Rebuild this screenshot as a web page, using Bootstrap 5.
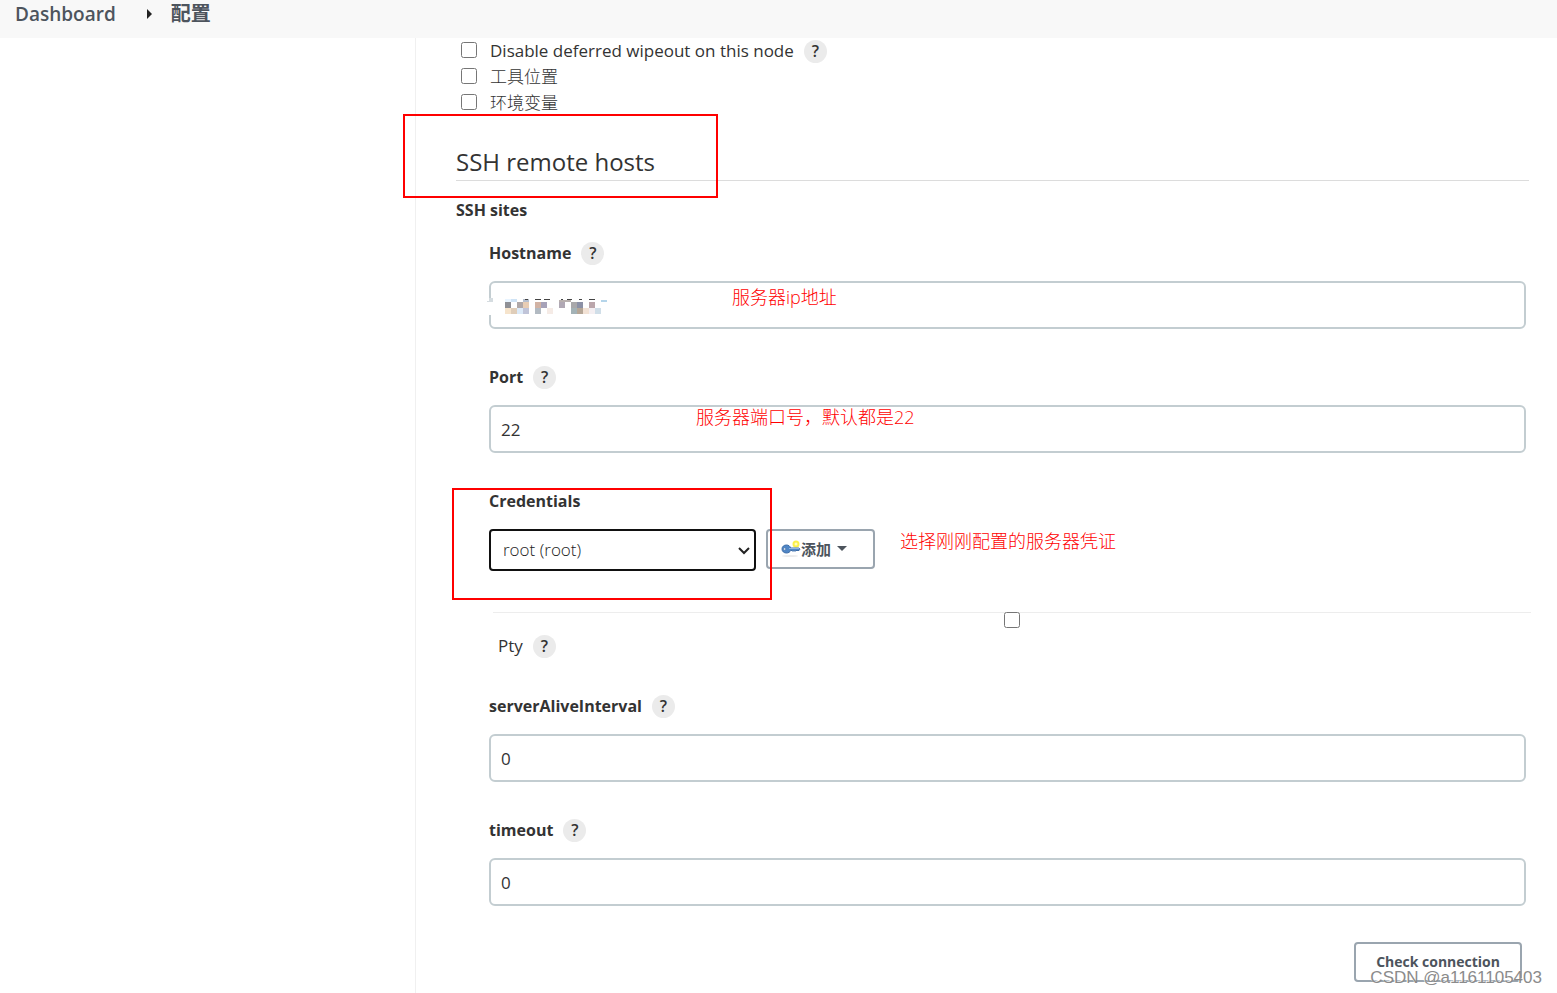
<!DOCTYPE html>
<html lang="zh-CN">
<head>
<meta charset="utf-8">
<meta name="viewport" content="width=device-width, initial-scale=1">
<title>配置 - Dashboard</title>
<link href="https://cdn.jsdelivr.net/npm/bootstrap@5.3.0/dist/css/bootstrap.min.css" rel="stylesheet">
<style>
  body {
    font-family: "Open Sans", "Noto Sans CJK SC", sans-serif;
    font-size: 17px;
    line-height: 26px;
    color: #333;
  }
  .crumb-bar { background: #f8f8f8; height: 38px; padding: 0 15px 10px; font-size: 19px; font-weight: 600; }
  .crumb-bar a { color: #4d545d; }
  .crumb-bar .crumb-current { font-size: 20px; }
  .crumb-bar svg { margin: 0 18px 0 30px; }
  .side-col { width: 415px; }
  .main-col { border-left: 1px solid #f0f0f0; padding: 0 28px 0 40px; min-width: 0; }
  .tick { width: 16px; height: 16px; margin: 0; flex: none; }
  .option-row { gap: 13px; padding-left: 5px; }
  .option-row .tick { margin-bottom: 2px; }
  .option-row label { line-height: 26px; }
  .option-text { gap: 10px; }
  .help-dot {
    width: 23px; height: 23px; border: 0; border-radius: 50%; padding: 0;
    background: #ebebeb; color: #333; font-size: 16px; font-weight: 600; line-height: 23px;
  }
  .section-title { font-size: 24px; font-weight: 500; line-height: 36px; margin: 0; padding-top: 28px; border-bottom: 1px solid #dcdcdc; }
  .sub-title { font-size: 16px; font-weight: 700; line-height: 26px; margin: 16px 0 18px; }
  .site-form { padding: 0 3px 0 33px; }
  .field { margin-bottom: 36px; }
  .field-head { height: 24px; gap: 10px; margin-bottom: 16px; }
  .field-head label { font-size: 16px; font-weight: 700; }
  .field-input { height: 48px; border: 2px solid #c3cdd1; border-radius: 6px; padding: 0 10px; font-size: 17px; color: #333; font-weight: 400; }
  .cred-select {
    width: 267px; height: 42px; border: 2px solid #111; border-radius: 4px; padding: 0 12px;
    font-size: 17px; font-weight: 300; color: #222; background-size: 14px 12px; background-position: right 3px center;
    background-image: url("data:image/svg+xml,%3csvg xmlns='http://www.w3.org/2000/svg' viewBox='0 0 14 12'%3e%3cpath fill='none' stroke='%23222' stroke-width='2' d='M2 4l5 5 5-5'/%3e%3c/svg%3e");
  }
  .jbtn { height: 40px; border: 2px solid #9aa5af; border-radius: 4px; background: #fff; color: #4d545d; font-size: 14px; font-weight: 700; padding: 0 20px; line-height: 24px; }
  .jbtn-add { width: 109px; padding: 0 0 0 13px; margin-left: 10px; font-size: 15px; font-weight: 600; }
  .caret { width: 10px; height: 6px; margin-left: 6px; }
  .pty-block { margin: 41px -5px 0 4px; border-top: 1px solid #ededed; }
  .pty-block .tick { margin-top: -1px; }
  .pty-head { padding: 5px 0 0 5px; gap: 10px; margin-bottom: 35px; }
  .frame { position: absolute; border: 2px solid #f00; pointer-events: none; }
  .frame-title { left: -53px; top: -2px; width: 315px; height: 84px; }
  .frame-cred { left: -37px; top: -1px; width: 320px; height: 112px; }
  .note { position: absolute; color: #f00; font-size: 18px; line-height: 26px; white-space: nowrap; pointer-events: none; font-weight: 300; }
  .note-host { left: 243px; top: 43px; }
  .note-port { left: 207px; top: 39px; }
  .note-cred { left: 411px; top: 39px; }
  .redacted { position: absolute; left: -2px; top: 57px; }
  .watermark { position: absolute; right: 15px; bottom: 3px; font-family: "Liberation Sans", sans-serif; font-size: 17px; line-height: 24px; color: #8b8b8b; text-shadow: -1px -1px 0 #fff; pointer-events: none; }
</style>
</head>
<body>
<div class="d-flex flex-column min-vh-100 position-relative overflow-hidden">
  <nav class="crumb-bar d-flex align-items-center" aria-label="breadcrumb">
    <a href="#" class="text-decoration-none">Dashboard</a>
    <svg width="7" height="10" viewBox="0 0 7 10" aria-hidden="true"><path d="M1 0l5 5-5 5z" fill="#222"/></svg>
    <a href="#" class="crumb-current text-decoration-none">配置</a>
  </nav>

  <div class="d-flex flex-grow-1">
    <aside class="side-col flex-shrink-0"></aside>
    <main class="main-col flex-grow-1">
      <div class="option-row d-flex align-items-center">
        <input type="checkbox" class="tick" id="wipeout">
        <div class="option-text d-flex align-items-center">
          <label for="wipeout">Disable deferred wipeout on this node</label>
          <button type="button" class="help-dot" aria-label="Help">?</button>
        </div>
      </div>
      <div class="option-row d-flex align-items-center">
        <input type="checkbox" class="tick" id="tools">
        <label for="tools" class="fw-light">工具位置</label>
      </div>
      <div class="option-row d-flex align-items-center">
        <input type="checkbox" class="tick" id="envvars">
        <label for="envvars" class="fw-light">环境变量</label>
      </div>

      <div class="position-relative">
        <h2 class="section-title">SSH remote hosts</h2>
        <div class="frame frame-title"></div>
      </div>
      <h3 class="sub-title">SSH sites</h3>

      <form class="site-form">
        <div class="field position-relative">
          <div class="field-head d-flex align-items-center">
            <label for="hostname">Hostname</label>
            <button type="button" class="help-dot" aria-label="Help">?</button>
          </div>
          <input type="text" class="form-control field-input" id="hostname">
          <svg class="redacted" width="120" height="17" viewBox="0 0 120 17" shape-rendering="crispEdges" aria-hidden="true">
            <path fill="#fff" d="M0 0h120v17H0z"/>
            <path fill="#d5dce0" d="M2 0h4v4H0V3h2z"/>
            <path fill="#e8f4ff" d="M18 1h6v3h-6z"/><path fill="#cfe3f5" d="M24 1h6v3h-6z"/>
            <path fill="#b6c0d0" d="M36 1h6v3h-6z"/><path fill="#8f9096" d="M18 4h6v6h-6z"/>
            <path fill="#b0a8a8" d="M30 4h6v6h-6z"/><path fill="#e8cdb4" d="M36 4h6v6h-6z"/>
            <path fill="#d2b3a4" d="M48 4h6v6h-6z"/><path fill="#a7a2b8" d="M54 4h6v6h-6z"/>
            <path fill="#b0a8b4" d="M72 4h6v6h-6z"/><path fill="#b8b0ae" d="M72 2h12v2H72z"/>
            <path fill="#a9a8aa" d="M84 4h6v6h-6z"/><path fill="#8c91a6" d="M90 4h6v6h-6z"/>
            <path fill="#bba6ab" d="M102 4h6v6h-6z"/><path fill="#b5d5ea" d="M114 2h6v2h-6z"/>
            <path fill="#f6e4cc" d="M18 10h6v6h-6z"/><path fill="#dfcdb9" d="M24 10h6v6h-6z"/>
            <path fill="#dceaf8" d="M30 10h6v6h-6z"/><path fill="#c0c4d8" d="M36 10h6v6h-6z"/>
            <path fill="#b2bac2" d="M48 10h6v6h-6z"/><path fill="#f5ebe6" d="M60 10h6v6h-6z"/>
            <path fill="#a3b2b6" d="M84 10h6v6h-6z"/><path fill="#b5a696" d="M90 10h6v6h-6z"/>
            <path fill="#f2e2d5" d="M96 10h6v6h-6z"/><path fill="#f4eff2" d="M102 10h6v6h-6z"/>
            <path fill="#d0dee8" d="M108 10h6v6h-6z"/>
            <path fill="#444" d="M38 1h3v1h-3zM48 1h6v1h-6zM57 1h6v1h-6zM74 1h2v1h-2zM80 1h5v1h-5zM92 1h3v1h-3zM102 1h6v1h-6z"/>
          </svg>
          <div class="note note-host">服务器ip地址</div>
        </div>

        <div class="field position-relative">
          <div class="field-head d-flex align-items-center">
            <label for="port">Port</label>
            <button type="button" class="help-dot" aria-label="Help">?</button>
          </div>
          <input type="text" class="form-control field-input" id="port" value="22">
          <div class="note note-port">服务器端口号，默认都是22</div>
        </div>

        <div class="position-relative">
          <div class="field-head d-flex align-items-center">
            <label for="cred">Credentials</label>
          </div>
          <div class="d-flex align-items-start">
            <select class="form-select cred-select" id="cred"><option>root (root)</option></select>
            <button type="button" class="jbtn jbtn-add d-flex align-items-center">
              <svg width="20" height="18" viewBox="0 0 20 18" aria-hidden="true">
                <ellipse cx="9" cy="16" rx="8" ry="1" fill="#ececec"/>
                <circle cx="15" cy="4" r="2.5" fill="#fffbc0" stroke="#fbf04a" stroke-width="2"/>
                <path d="M5.500 5C3 5 1 6.500 1 9s2 4 4.500 4C7.500 13 9 12 9.600 10.500h1.400l1 .8 1-.8 1 .8 1-.8h3l.8-1.200-.8-1.300H9.600C9 6 7.500 5 5.500 5z" fill="#4f86c6" stroke="#3c6ca8"/>
                <path d="M8 8.500h10" stroke="#8fb4de"/>
                <circle cx="3.600" cy="9" r="1.200" fill="#e8f0fa" stroke="#2f5a92" stroke-width=".5"/>
              </svg>
              <span>添加</span>
              <svg class="caret" viewBox="0 0 10 6" aria-hidden="true"><path d="M0 0h10L5 5z" fill="#4d545d"/></svg>
            </button>
          </div>
          <div class="frame frame-cred"></div>
          <div class="note note-cred">选择刚刚配置的服务器凭证</div>
        </div>

        <div class="pty-block">
          <div class="d-flex justify-content-center"><input type="checkbox" class="tick" id="pty"></div>
          <div class="pty-head d-flex align-items-center">
            <label for="pty">Pty</label>
            <button type="button" class="help-dot" aria-label="Help">?</button>
          </div>
        </div>

        <div class="field">
          <div class="field-head d-flex align-items-center">
            <label for="alive">serverAliveInterval</label>
            <button type="button" class="help-dot" aria-label="Help">?</button>
          </div>
          <input type="text" class="form-control field-input" id="alive" value="0">
        </div>

        <div class="field mb-0">
          <div class="field-head d-flex align-items-center">
            <label for="timeout">timeout</label>
            <button type="button" class="help-dot" aria-label="Help">?</button>
          </div>
          <input type="text" class="form-control field-input" id="timeout" value="0">
        </div>

        <div class="d-flex justify-content-end pe-1 mt-3 pt-3">
          <button type="button" class="jbtn mt-1">Check connection</button>
        </div>
      </form>
    </main>
  </div>
  <div class="watermark">CSDN @a1161105403</div>
</div>
<script src="https://cdn.jsdelivr.net/npm/bootstrap@5.3.0/dist/js/bootstrap.bundle.min.js"></script>
</body>
</html>
